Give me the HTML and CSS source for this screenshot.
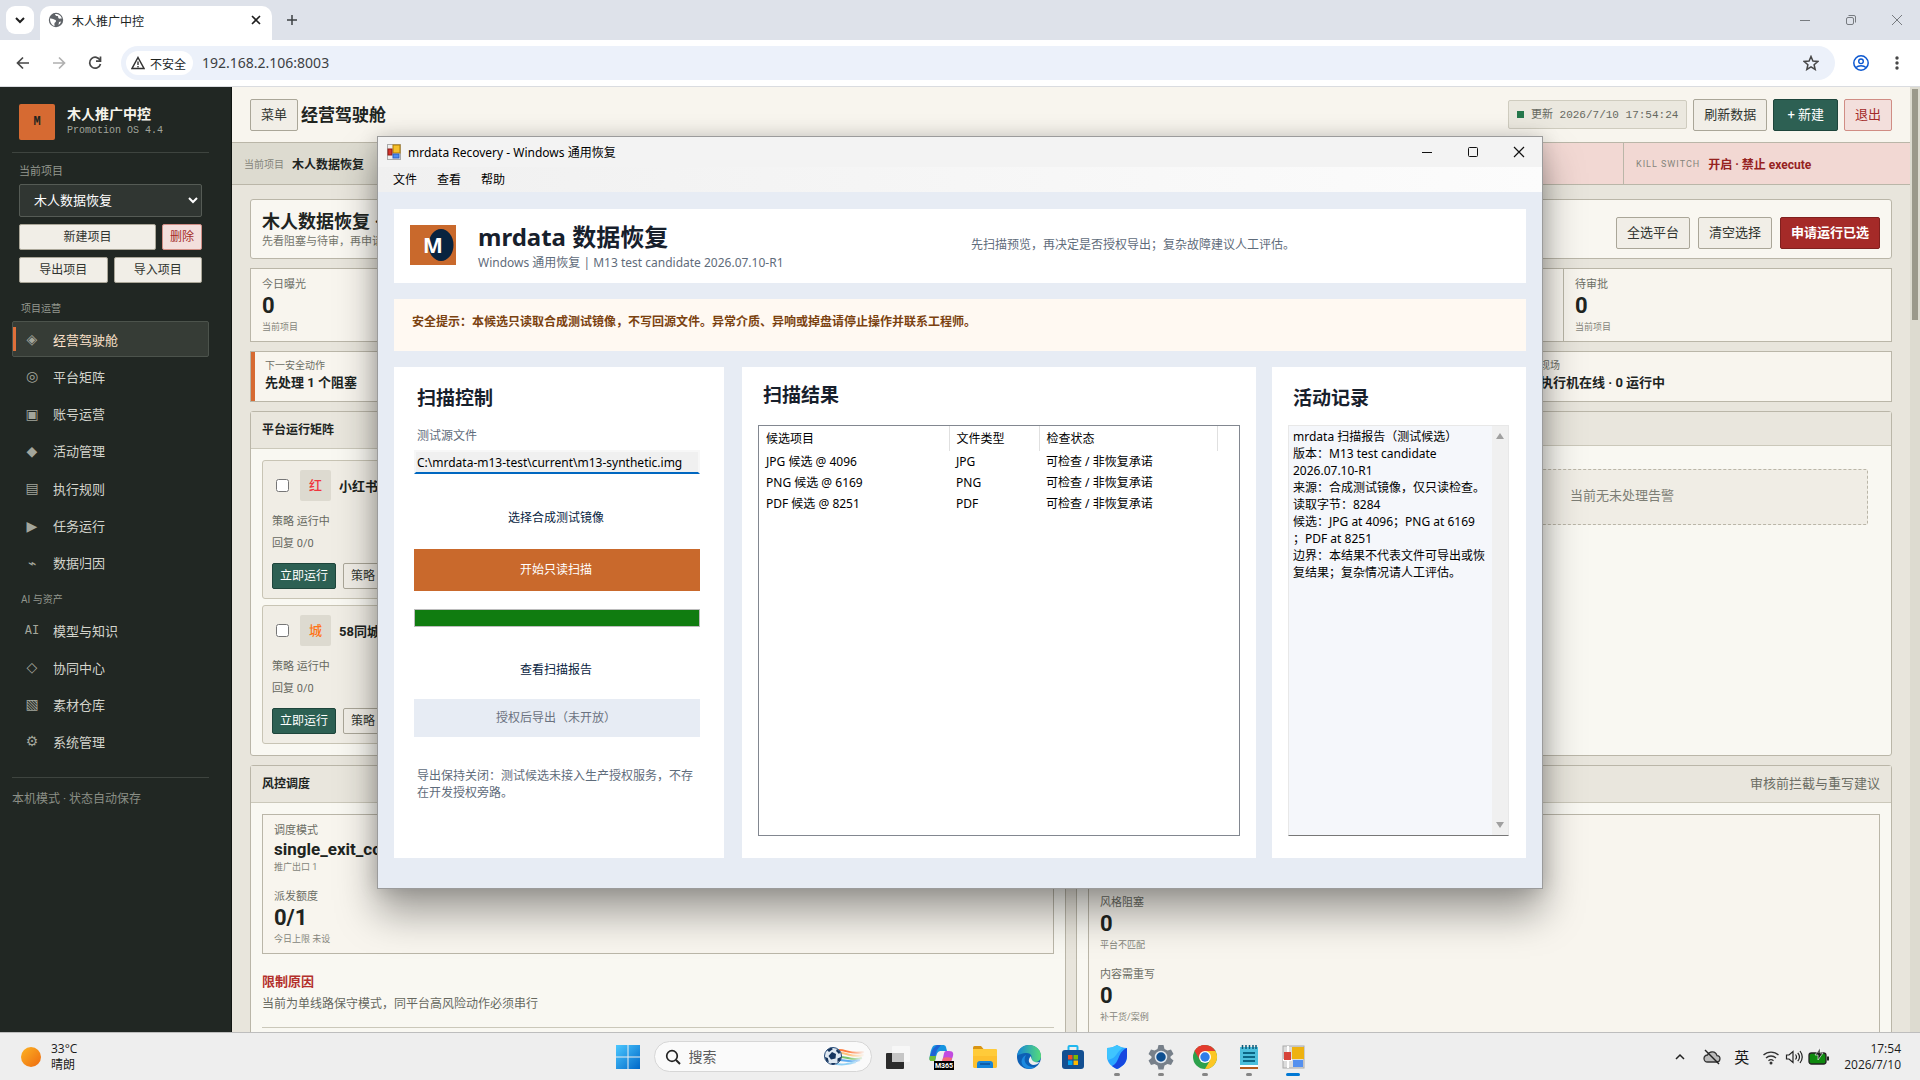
FILE: index.html
```html
<!DOCTYPE html>
<html lang="zh-CN">
<head>
<meta charset="utf-8">
<title>木人推广中控</title>
<link rel="stylesheet" href="styles.css">
</head>
<body>
<div class="desktop">
  <div class="browser">
    <div class="tabstrip">
      <button class="tab-search" aria-label="搜索标签页"><svg width="12" height="12" viewBox="0 0 12 12"><path d="M2 4l4 4 4-4" fill="none" stroke="#1f1f1f" stroke-width="2"/></svg></button>
      <div class="tab">
        <svg width="16" height="16" viewBox="0 0 16 16"><circle cx="8" cy="8" r="7.2" fill="#5f6368"/><path d="M2 6.500c2.500-.5 3.500 1 5 1.200 1.500.3 1.200 2.300 0 2.800-.8.400-.6 1.500-.4 3.500C4 13.500 1.800 10.500 2 6.500zM7 2c.3 1.500 1 2 2.500 2 1 .2.500 1.800 1 2.300.8.700 2 .2 3.300.2C13.500 4 10.500 1.500 7 2zM11 10l2-.5c-.3 1.500-1.200 2.700-2.500 3.500z" fill="#fff"/></svg>
        <span class="tab-title">木人推广中控</span>
        <button class="plain" aria-label="关闭标签页"><svg width="10" height="10" viewBox="0 0 10 10"><path d="M1 1l8 8M9 1l-8 8" stroke="#1f1f1f" stroke-width="1.600"/></svg></button>
      </div>
      <button class="plain new-tab" aria-label="新标签页"><svg width="12" height="12" viewBox="0 0 12 12"><path d="M6 1v10M1 6h10" stroke="#3c4043" stroke-width="1.500"/></svg></button>
      <div class="win-controls">
        <svg width="12" height="12" viewBox="0 0 12 12"><path d="M1 6.500h10" stroke="#777b80"/></svg>
        <svg width="12" height="12" viewBox="0 0 12 12"><rect x="1.500" y="3.500" width="7" height="7" rx="1.500" fill="none" stroke="#777b80"/><path d="M3.500 1.500h5.500a1.500 1.500 0 0 1 1.500 1.500v5.500" fill="none" stroke="#777b80"/></svg>
        <svg width="12" height="12" viewBox="0 0 12 12"><path d="M1 1l10 10M11 1L1 11" stroke="#777b80"/></svg>
      </div>
    </div>
    <div class="toolbar">
      <button class="plain" aria-label="后退"><svg width="16" height="16" viewBox="0 0 16 16"><path d="M14 8H3M8 2.500L2.500 8 8 13.500" fill="none" stroke="#474747" stroke-width="1.700"/></svg></button>
      <button class="plain" aria-label="前进"><svg width="16" height="16" viewBox="0 0 16 16"><path d="M2 8h11M8 2.500L13.500 8 8 13.500" fill="none" stroke="#b0b0b0" stroke-width="1.700"/></svg></button>
      <button class="plain" aria-label="重新加载"><svg width="16" height="16" viewBox="0 0 16 16"><path d="M13.200 5.500A5.500 5.500 0 1 0 13.500 9" fill="none" stroke="#474747" stroke-width="1.700"/><path d="M13.500 1.500v4.700H9" fill="none" stroke="#474747" stroke-width="1.700"/></svg></button>
      <div class="omnibox">
        <button class="chip"><svg width="14" height="14" viewBox="0 0 14 14"><path d="M7 1.500L13 12.500H1z" fill="none" stroke="#333" stroke-width="1.500"/><path d="M7 5.500v3.500M7 10v1.500" stroke="#333" stroke-width="1.400"/></svg>不安全</button>
        <input class="url" aria-label="地址" value="192.168.2.106:8003">
        <svg width="16" height="16" viewBox="0 0 16 16"><path d="M8 1.500l1.900 4.600 4.900.4-3.700 3.200 1.100 4.800L8 11.900l-4.200 2.600 1.100-4.800L1.200 6.500l4.900-.4z" fill="none" stroke="#474747" stroke-width="1.500"/></svg>
      </div>
      <svg width="16" height="16" viewBox="0 0 16 16"><circle cx="8" cy="8" r="7.200" fill="none" stroke="#0b57d0" stroke-width="1.500"/><circle cx="8" cy="6.300" r="2.300" fill="none" stroke="#0b57d0" stroke-width="1.400"/><path d="M3 12.500c2.500-2.400 7.500-2.400 10 0" fill="none" stroke="#0b57d0" stroke-width="1.500"/></svg>
      <svg width="16" height="16" viewBox="0 0 16 16"><g fill="#474747"><circle cx="8" cy="3" r="1.700"/><circle cx="8" cy="8" r="1.700"/><circle cx="8" cy="13" r="1.700"/></g></svg>
    </div>

    <div class="page">
      <aside class="sidebar">
        <div class="brand">
          <div class="brand-logo">M</div>
          <div><div class="brand-name">木人推广中控</div><div class="brand-sub">Promotion OS 4.4</div></div>
        </div>
        <div class="project">
          <label for="project">当前项目</label>
          <select id="project"><option>木人数据恢复</option></select>
          <div class="project-row wide-first"><button class="btn sm">新建项目</button><button class="btn sm danger">删除</button></div>
          <div class="project-row"><button class="btn sm">导出项目</button><button class="btn sm">导入项目</button></div>
        </div>
        <div class="nav-title">项目运营</div>
        <nav class="nav nav-main">
          <a href="#" class="active"><i>◈</i>经营驾驶舱</a>
          <a href="#"><i>◎</i>平台矩阵</a>
          <a href="#"><i>▣</i>账号运营</a>
          <a href="#"><i>◆</i>活动管理</a>
          <a href="#"><i>▤</i>执行规则</a>
          <a href="#"><i>▶</i>任务运行</a>
          <a href="#"><i>⌁</i>数据归因</a>
        </nav>
        <div class="nav-title">AI 与资产</div>
        <nav class="nav">
          <a href="#"><i class="mono">AI</i>模型与知识</a>
          <a href="#"><i>◇</i>协同中心</a>
          <a href="#"><i>▧</i>素材仓库</a>
          <a href="#"><i>⚙</i>系统管理</a>
        </nav>
        <div class="side-foot">本机模式 · 状态自动保存</div>
      </aside>

      <main class="main">
        <header class="topbar">
          <button class="btn">菜单</button>
          <h1>经营驾驶舱</h1>
          <div class="sync"><b></b><span>更新 2026/7/10 17:54:24</span></div>
          <button class="btn">刷新数据</button>
          <button class="btn primary">+ 新建</button>
          <button class="btn danger">退出</button>
        </header>
        <div class="strip">
          <div><span>当前项目</span><strong>木人数据恢复</strong></div>
          <div></div><div></div><div class="alert"></div>
          <div class="alert"><span class="caps">KILL SWITCH</span><strong>开启 · 禁止 execute</strong></div>
        </div>
        <div class="content">
          <section class="hero">
            <div class="hero-text"><h2>木人数据恢复 ·</h2><p>先看阻塞与待审，再申请</p></div>
            <button class="btn">全选平台</button>
            <button class="btn">清空选择</button>
            <button class="btn run">申请运行已选</button>
          </section>
          <section class="metrics">
            <div class="metric"><span>今日曝光</span><strong>0</strong><small>当前项目</small></div>
            <div class="metric"></div><div class="metric"></div><div class="metric"></div>
            <div class="metric"><span>待审批</span><strong>0</strong><small>当前项目</small></div>
          </section>
          <section class="actions">
            <div class="first"><span>下一安全动作</span><strong>先处理 1 个阻塞</strong></div>
            <div><span>现场</span><strong>执行机在线 · 0 运行中</strong></div>
          </section>
          <div class="row row-top">
            <section class="panel">
              <header class="panel-head tall"><h3>平台运行矩阵</h3></header>
              <div class="panel-body platforms">
                <article class="platform">
                  <div class="platform-head"><input type="checkbox" aria-label="选择小红书"><span class="avatar red">红</span><strong>小红书</strong></div>
                  <p>策略 运行中</p><p>回复 0/0</p>
                  <div class="platform-btns"><button class="btn sm primary">立即运行</button><button class="btn sm">策略</button></div>
                </article>
                <article class="platform">
                  <div class="platform-head"><input type="checkbox" aria-label="选择58同城"><span class="avatar orange">城</span><strong>58同城</strong></div>
                  <p>策略 运行中</p><p>回复 0/0</p>
                  <div class="platform-btns"><button class="btn sm primary">立即运行</button><button class="btn sm">策略</button></div>
                </article>
              </div>
            </section>
            <section class="panel">
              <header class="panel-head"></header>
              <div class="alerts"><div class="empty">当前无未处理告警</div></div>
            </section>
          </div>
          <div class="row row-bottom">
            <section class="panel">
              <header class="panel-head tall"><h3>风控调度</h3></header>
              <div class="panel-body">
                <div class="stats">
                  <div class="metric short"><span>调度模式</span><strong class="word">single_exit_conservative</strong><small>推广出口 1</small></div>
                  <div class="metric"><span>派发额度</span><strong>0/1</strong><small>今日上限 未设</small></div>
                </div>
                <h4>限制原因</h4>
                <p class="reason">当前为单线路保守模式，同平台高风险动作必须串行</p>
              </div>
            </section>
            <section class="panel">
              <header class="panel-head tall"><span class="hint">审核前拦截与重写建议</span></header>
              <div class="panel-body">
                <div class="stats">
                  <div class="metric"></div>
                  <div class="metric"><span>风格阻塞</span><strong>0</strong><small>平台不匹配</small></div>
                  <div class="metric"><span>内容需重写</span><strong>0</strong><small>补干货/案例</small></div>
                  <div class="metric"></div>
                </div>
              </div>
            </section>
          </div>
        </div>
      </main>
      <div class="page-scroll"><div></div></div>
    </div>
  </div>

  <div class="window">
    <div class="titlebar">
      <svg width="14" height="16" viewBox="0 0 14 16"><rect x=".5" y=".5" width="13" height="15" fill="#eee" stroke="#aaa"/><rect x="6" y="1" width="7" height="8" fill="#f5c02c" stroke="#b07a00"/><rect x="1" y="5" width="4" height="6" fill="#d8342c" stroke="#8c1c16"/><rect x="6" y="10" width="6" height="4" fill="#4d8df0" stroke="#2c5fc0"/></svg>
      <span>mrdata Recovery - Windows 通用恢复</span>
      <div class="dlg-controls">
        <svg width="12" height="12" viewBox="0 0 12 12"><path d="M1 6.500h10" stroke="#111"/></svg>
        <svg width="12" height="12" viewBox="0 0 12 12"><rect x="1.500" y="1.500" width="9" height="9" rx="1" fill="none" stroke="#111"/></svg>
        <svg width="12" height="12" viewBox="0 0 12 12"><path d="M1 1l10 10M11 1L1 11" stroke="#111" stroke-width="1.200"/></svg>
      </div>
    </div>
    <div class="menubar"><button>文件</button><button>查看</button><button>帮助</button></div>
    <div class="dlg-body">
      <header class="dlg-head">
        <svg width="46" height="40" viewBox="0 0 46 40"><rect width="46" height="40" fill="#c9692c"/><ellipse cx="31" cy="20" rx="12.500" ry="16" fill="#08233f"/><text x="13" y="28" class="logo-m">M</text></svg>
        <div class="dlg-names"><h2>mrdata 数据恢复</h2><p>Windows 通用恢复 | M13 test candidate 2026.07.10-R1</p></div>
        <p class="dlg-tip">先扫描预览，再决定是否授权导出；复杂故障建议人工评估。</p>
      </header>
      <div class="warning">安全提示：本候选只读取合成测试镜像，不写回源文件。异常介质、异响或掉盘请停止操作并联系工程师。</div>
      <div class="dlg-cols">
        <section class="card control">
          <h3>扫描控制</h3>
          <label for="src">测试源文件</label>
          <input id="src" value="C:\mrdata-m13-test\current\m13-synthetic.img">
          <button class="flat pick">选择合成测试镜像</button>
          <button class="flat scan">开始只读扫描</button>
          <div class="progress" role="progressbar" aria-label="扫描进度" aria-valuenow="100"></div>
          <button class="flat report">查看扫描报告</button>
          <button class="flat export" disabled>授权后导出（未开放）</button>
          <p>导出保持关闭：测试候选未接入生产授权服务，不存在开发授权旁路。</p>
        </section>
        <section class="card results">
          <h3>扫描结果</h3>
          <div class="list">
            <table>
              <colgroup><col class="c1"><col class="c2"><col class="c3"><col></colgroup>
              <thead><tr><th>候选项目</th><th>文件类型</th><th>检查状态</th><td></td></tr></thead>
              <tbody>
                <tr><td>JPG 候选 @ 4096</td><td>JPG</td><td>可检查 / 非恢复承诺</td></tr>
                <tr><td>PNG 候选 @ 6169</td><td>PNG</td><td>可检查 / 非恢复承诺</td></tr>
                <tr><td>PDF 候选 @ 8251</td><td>PDF</td><td>可检查 / 非恢复承诺</td></tr>
              </tbody>
            </table>
          </div>
        </section>
        <section class="card log">
          <h3 id="log-title">活动记录</h3>
          <div class="logbox">
            <textarea readonly aria-labelledby="log-title">mrdata 扫描报告（测试候选）
版本：M13 test candidate
2026.07.10-R1
来源：合成测试镜像，仅只读检查。
读取字节：8284
候选：JPG at 4096；PNG at 6169
；PDF at 8251
边界：本结果不代表文件可导出或恢
复结果；复杂情况请人工评估。</textarea>
            <div class="logbar"><svg width="10" height="8" viewBox="0 0 10 8"><path d="M5 1l4 6H1z" fill="#a0a0a0"/></svg><svg width="10" height="8" viewBox="0 0 10 8"><path d="M5 7L1 1h8z" fill="#a0a0a0"/></svg></div>
          </div>
        </section>
      </div>
    </div>
  </div>

  <footer class="taskbar">
    <div class="weather">
      <svg width="22" height="22" viewBox="0 0 22 22"><defs><linearGradient id="sun" x1="0" y1="0" x2="1" y2="1"><stop offset="0" stop-color="#fcb424"/><stop offset="1" stop-color="#ee6a10"/></linearGradient></defs><circle cx="11" cy="11" r="10" fill="url(#sun)"/></svg>
      <div>33°C<br>晴朗</div>
    </div>
    <div class="apps">
      <button class="start" aria-label="开始"><svg width="24" height="24" viewBox="0 0 24 24"><defs><linearGradient id="win" x1="0" y1="0" x2="1" y2="1"><stop offset="0" stop-color="#4cc8ff"/><stop offset="1" stop-color="#0067c8"/></linearGradient></defs><path d="M0 0h11.500v11.500H0zM12.500 0H24v11.500H12.500zM0 12.500h11.500V24H0zM12.500 12.500H24V24H12.500z" fill="url(#win)"/></svg></button>
      <label class="search">
        <svg width="16" height="16" viewBox="0 0 16 16"><circle cx="7" cy="7" r="5.300" fill="none" stroke="#222" stroke-width="1.700"/><path d="M11 11l4 4" stroke="#222" stroke-width="1.900"/></svg>
        <input placeholder="搜索" aria-label="搜索">
        <svg width="42" height="24" viewBox="0 0 42 24"><defs><linearGradient id="fade" x1="0" x2="1" y1="0" y2="0"><stop offset="0" stop-color="#fff" stop-opacity="1"/><stop offset=".6" stop-color="#fff"/><stop offset="1" stop-color="#fff" stop-opacity="0"/></linearGradient><mask id="trail"><rect width="42" height="24" fill="url(#fade)"/></mask></defs><g mask="url(#trail)" fill="none" stroke-width="2"><path d="M16 5c8 0 12 5 25 2" stroke="#ff7a3c"/><path d="M17 8c8 0 12 5 24 2" stroke="#ffc27a"/><path d="M17 12c8 0 12 4 22 1" stroke="#7cc36b"/><path d="M16 15c8 0 12 3 21 0" stroke="#5ba9f0"/><path d="M13 19c8 1 12 0 20-2" stroke="#8fd0f5"/></g><circle cx="10" cy="11" r="8.500" fill="#dfe8f1" stroke="#254a78"/><path d="M9 7l4 2-.5 4.500-4.500 1L5.500 11zM4 5l4-2.500L10 4 6 7zM14 4l3.500 3L16 9l-3-3zM1.800 12l3 1 1 4-2.300-.5zM18 12l-3.500 1.500V17l3-1.500zM8 18h5l-2 1.500H9z" fill="#16355e"/></svg>
      </label>
      <button aria-label="任务视图"><svg width="26" height="26" viewBox="0 0 26 26"><rect x="2" y="9" width="18" height="16" rx="1" fill="#2b2b2b"/><rect x="8" y="2" width="18" height="16" rx="1" fill="#f7f7f7"/><rect x="8" y="9" width="12" height="9" fill="#c6c6c6"/></svg></button>
      <button aria-label="Microsoft 365"><svg width="26" height="26" viewBox="0 0 26 26"><path d="M8 1h7c3 0 3 2 4 6h-6c-3 0-4 2-5 6l-1 4H5c-4 0-4-2-3-6 1-5 2-10 6-10z" fill="#1694e0"/><path d="M7 3c-3 2-4 6-5 10 1 1 3 0 5 0l2-7 4-5H9z" fill="#1f62d4"/><path d="M2 12h6l-1 5H4c-3 0-3-2-2-5z" fill="#71bd38"/><path d="M18 7h3c5 0 5 3 3 8-1 4-3 6-7 6H9c5 0 5-3 6-7 1-4 1-7 3-7z" fill="#c14be0"/><path d="M15 14c2-1 6-1 9 0-1 4-3 6-7 6h-6c3 0 3-3 4-6z" fill="#f26a75"/><rect x="6" y="17" width="20" height="9" fill="#000"/><text x="16" y="24" class="m365">M365</text></svg></button>
      <button aria-label="文件资源管理器"><svg width="26" height="26" viewBox="0 0 26 26"><path d="M1 3.500Q1 2 2.500 2H9l2.500 3H1z" fill="#d99412"/><path d="M1 5h23q1 0 1 1v16q0 2-2 2H3q-2 0-2-2z" fill="#ffcb3a"/><path d="M1 12h24v10q0 2-2 2H3q-2 0-2-2z" fill="#fdc02f"/><path d="M5 24v-4q0-3 3-3h10q3 0 3 3v4z" fill="#1583d8"/><path d="M8 20h10" stroke="#0d5ba6" stroke-width="2"/></svg></button>
      <button aria-label="Edge"><svg width="26" height="26" viewBox="0 0 26 26"><defs><linearGradient id="edge" x1="0" y1="0" x2="1" y2="0"><stop offset="0" stop-color="#1585d8"/><stop offset="1" stop-color="#56dc78"/></linearGradient></defs><circle cx="13" cy="13" r="12" fill="#0d5fb4"/><path d="M1 12C2 4 8 1 13 1c8 0 12 6 12 11 0 4-3 6-6 6s-5-1-4-3c2-3-1-6-4-6-5 0-9 2-10 3z" fill="url(#edge)"/><path d="M10 11c-4 6 1 13 9 12-3 2-7 2-9 1-6-3-6-10 0-13z" fill="#1b8ae0"/><path d="M15 12c-4 4-2 8 2 9 3 0 5-1 7-3-4 1-9 0-9-6z" fill="#eee"/></svg></button>
      <button aria-label="Microsoft Store"><svg width="26" height="26" viewBox="0 0 26 26"><path d="M8.500 6V3q0-1 1-1h7q1 0 1 1v3" fill="none" stroke="#1fb7ef" stroke-width="2"/><rect x="2" y="6" width="22" height="19" rx="3" fill="#134f91"/><path d="M8 11h4.500v4.500H8z" fill="#f25022"/><path d="M13.500 11H18v4.500h-4.500z" fill="#7fba00"/><path d="M8 16.500h4.500V21H8z" fill="#00a4ef"/><path d="M13.500 16.500H18V21h-4.500z" fill="#ffb900"/></svg></button>
      <button class="open" aria-label="安全"><svg width="26" height="26" viewBox="0 0 26 26"><path d="M3 4c4 0 7-1 10-3 3 2 6 3 10 3v8c0 7-5 11-10 13C8 23 3 19 3 12z" fill="#2aa8ff"/><path d="M23 4v8c0 7-5 11-10 13-2-1-4-2-5-3 8-3 5-14 15-18z" fill="#1747e0"/><path d="M13 1c2 1.500 4 2.500 6 2.700C12 8 13 14 4 16c-1-2-1-8-1-12 4 0 7-1 10-3z" fill="#3fc5ff"/></svg></button>
      <button class="open" aria-label="设置"><svg width="26" height="26" viewBox="0 0 26 26"><path d="M10.500 1h5l1 4 3 1.500 3.500-1 2.500 4.500-3 2.500v1.500l3 2.500-2.500 4.500-3.500-1-3 1.500-1 4h-5l-1-4-3-1.500-3.500 1L.5 16.500l3-2.500v-1.500L.5 10 3 5.500l3.500 1 3-1.500z" fill="#77808a"/><circle cx="13" cy="13" r="5.500" fill="#0e4f91" stroke="#dfe6ee" stroke-width="1.500"/></svg></button>
      <button class="open" aria-label="Chrome"><svg width="26" height="26" viewBox="0 0 26 26"><circle cx="13" cy="13" r="12" fill="#2da14c"/><path d="M13 13L2.600 7A12 12 0 0 1 23.400 7z" fill="#e33b2e"/><path d="M13 7h10.400A12 12 0 0 1 13 25l5.200-9z" fill="#fcc624"/><path d="M2.600 7A12 12 0 0 1 13 1v6L8 16z" fill="#e33b2e"/><circle cx="13" cy="13" r="6" fill="#fff"/><circle cx="13" cy="13" r="4.700" fill="#2f7de9"/></svg></button>
      <button class="open" aria-label="记事本"><svg width="26" height="26" viewBox="0 0 26 26"><rect x="4" y="3" width="18" height="20" fill="#4cbfdc"/><path d="M4 21h18v2H4z" fill="#fff"/><path d="M4 23h18v2H4z" fill="#b35a1c"/><path d="M6.500 1v4M10 1v4M13.500 1v4M17 1v4M20 1v4" stroke="#0b5a78" stroke-width="1.500"/><path d="M7 9h12M7 13h12M7 17h12" stroke="#0b6685" stroke-width="1.800"/></svg></button>
      <button class="open current" aria-label="mrdata Recovery"><svg width="26" height="26" viewBox="0 0 26 26"><rect x="3" y="2" width="21" height="22" fill="#ddd" stroke="#aaa"/><path d="M3 16h9M8 2v22" stroke="#fff" stroke-width="2"/><rect x="12" y="3" width="12" height="12" fill="#eeb211"/><rect x="4" y="8" width="7" height="8" fill="#d7443a"/><rect x="13" y="16" width="10" height="7" fill="#5590ee"/></svg></button>
    </div>
    <div class="tray">
      <svg class="chev" width="12" height="12" viewBox="0 0 12 12"><path d="M2 8l4-4 4 4" fill="none" stroke="#222" stroke-width="1.500"/></svg>
      <svg class="cloud" width="18" height="18" viewBox="0 0 18 18"><path d="M4.500 14h9a3.200 3.200 0 0 0 .5-6.400A5 5 0 0 0 4.500 7a3.500 3.500 0 0 0 0 7z" fill="#bbb" stroke="#333" stroke-width="1.300"/><path d="M2 2l14 14" stroke="#222" stroke-width="1.400"/></svg>
      <span class="ime">英</span>
      <svg width="18" height="18" viewBox="0 0 18 18"><path d="M1.500 7a11 11 0 0 1 15 0M4 10a7.200 7.200 0 0 1 10 0M6.500 12.800a3.600 3.600 0 0 1 5 0" fill="none" stroke="#333" stroke-width="1.300"/><circle cx="9" cy="15" r="1.500" fill="#333"/></svg>
      <svg width="18" height="18" viewBox="0 0 18 18"><path d="M1.500 7v4H4l4 3.500v-11L4 7zM10.500 6.500q2 2.500 0 5M12.800 4.800q3.400 4.200 0 8.400M15 3q4.500 6 0 12" fill="none" stroke="#222" stroke-width="1.200"/></svg>
      <svg class="battery" width="22" height="18" viewBox="0 0 22 18"><rect x="1" y="5" width="17" height="11" rx="2.500" fill="#0f8a0f" stroke="#222" stroke-width="1.300"/><path d="M20 8.500v4" stroke="#222" stroke-width="2"/><path d="M10 0v5M12 0L7 7h3v5l5-7h-3z" fill="#222" stroke="#fff" stroke-width=".6"/></svg>
      <div class="clock">17:54<br>2026/7/10</div>
    </div>
  </footer>
</div>
</body>
</html>
```
FILE: styles.css
```css
* { box-sizing: border-box; }
body { margin: 0; font-family: Roboto, "Noto Sans CJK SC", sans-serif; color: #20241f; }
button, input, select, textarea { font: inherit; color: inherit; margin: 0; }
h1, h2, h3, h4, p { margin: 0; }
svg { display: block; flex: none; }
.desktop { position: relative; height: 100vh; display: flex; flex-direction: column; overflow: hidden; }

/* Browser frame */
.browser { flex: 1; min-height: 0; display: flex; flex-direction: column; background: #fff; }
.plain { border: 0; padding: 0; background: none; }
.tabstrip { height: 40px; background: #dee2ea; display: flex; align-items: center; padding-left: 6px; font-size: 12px; }
.tab-search { width: 28px; height: 28px; border: 0; border-radius: 9px; background: #fff; padding: 0 8px; }
.tab { align-self: flex-end; margin-left: 6px; width: 232px; height: 34px; border-radius: 10px 10px 0 0; background: #fff; display: flex; align-items: center; gap: 8px; padding: 0 11px 6px 8px; }
.tab-title { flex: 1; }
.new-tab { margin-left: 14px; }
.win-controls { margin-left: auto; display: flex; gap: 34px; padding-right: 17px; }
.toolbar { height: 47px; border-bottom: 1px solid #dadce0; display: flex; align-items: center; gap: 20px; padding: 0 15px; }
.omnibox { flex: 1; height: 34px; margin-left: -2px; margin-right: -2px; border-radius: 17px; background: #ecf1fa; display: flex; align-items: center; padding: 0 16px 0 5px; }
.chip { height: 24px; border: 0; border-radius: 12px; background: #fff; padding: 0 7px 0 5px; display: flex; align-items: center; gap: 5px; font-size: 12px; }
.url { flex: 1; margin-left: 9px; border: 0; padding: 0; background: none; font: 14px/20px "Noto Sans", sans-serif; color: #3c4043; }

/* Page */
.page { flex: 1; min-height: 0; display: flex; background: #e8e5dc; }
.sidebar { width: 232px; flex: none; background: #212723; color: #d8d9d0; border-right: 1px solid #111512; padding: 17px 22px 0 12px; overflow: hidden; }
.brand { display: flex; gap: 12px; padding: 0 7px 12px; border-bottom: 1px solid #3e443f; }
.brand-logo { width: 36px; height: 36px; border-radius: 2px; background: #d66a32; color: #20241f; font: bold 12px/36px "Liberation Mono", monospace; text-align: center; }
.brand-name { font-size: 14px; line-height: 20px; font-weight: 700; color: #f6f4ec; }
.brand-sub { font: 10px/14px "Liberation Mono", monospace; color: #a0a49b; }
.project { padding: 11px 7px 0; }
.project label { display: block; font-size: 11px; line-height: 16px; color: #93978e; }
.project select { display: block; width: 100%; height: 33px; margin: 4px 0 7px; padding: 0 0 0 10px; border: 1px solid #555b55; border-radius: 2px; background: #303632; color: #fff; font-size: 13px; }
.project-row { display: grid; grid-template-columns: 1fr 1fr; gap: 6px; margin-bottom: 7px; }
.wide-first { grid-template-columns: 1fr 40px; }
.btn { height: 32px; padding: 0 10px; border: 1px solid #aaa698; border-radius: 2px; background: #f1eee7; color: #30342f; font-size: 13px; line-height: 18px; white-space: nowrap; }
.btn.sm { height: 26px; padding: 0 7px; font-size: 12px; }
.btn.primary { background: #2d6053; border-color: #1e453b; color: #fff; }
.btn.danger { background: #f3dfdc; border-color: #d08d84; color: #a32a28; padding: 0 4px; }
.btn.run { background: #a52a28; border-color: #80201e; color: #fff; font-weight: 700; }
.nav-title { padding: 0 9px; margin-top: 7px; font-size: 10px; line-height: 24px; color: #93978e; }
.project + .nav-title { margin-top: 14px; }
.nav { display: flex; flex-direction: column; gap: 1px; }
.nav-main { min-height: 260px; justify-content: space-between; gap: 0; }
.nav a { height: 36px; display: flex; align-items: center; padding-left: 8px; border: 1px solid transparent; border-radius: 2px; color: #d3d4cc; font-size: 13px; text-decoration: none; }
.nav i { width: 22px; margin-right: 10px; text-align: center; font: 14px/18px "DejaVu Sans", sans-serif; color: #a3a69c; }
.nav i.mono { font: 12px/18px "DejaVu Sans Mono", monospace; }
.nav a.active { background: linear-gradient(90deg, #e0703a 3px, transparent 3px) 0 50% / 100% 24px no-repeat #363c36; border-color: #4c534c; color: #fbe0ca; }
.side-foot { margin-top: 18px; padding-top: 12px; border-top: 1px solid #3e443f; font-size: 12px; line-height: 18px; color: #8b8f86; }

.main { flex: 1; min-width: 0; overflow: hidden; display: flex; flex-direction: column; }
.topbar { height: 56px; flex: none; border-bottom: 1px solid #bab6a8; background: #f8f5ee; display: flex; align-items: center; gap: 6px; padding: 0 18px; }
.topbar h1 { flex: 1; margin-left: -3px; font-size: 17px; line-height: 24px; }
.topbar .danger { padding: 0 10px; }
.topbar .primary { padding: 0 13px; }
.sync { height: 29px; display: flex; align-items: center; gap: 7px; padding: 0 8px; border: 1px solid #cfccbf; border-radius: 2px; background: #ebe8df; color: #66685f; font: 11px/18px "Liberation Mono", "Noto Sans CJK SC", monospace; white-space: nowrap; }
.sync b { width: 7px; height: 7px; background: #26784c; }
.strip { height: 42px; flex: none; display: grid; grid-template-columns: 1fr 1fr 1fr 1fr 287px; border-bottom: 1px solid #bab6a8; background: #dddbd0; }
.strip div { display: flex; align-items: center; gap: 8px; padding-left: 12px; border-left: 1px solid #bab6a8; white-space: nowrap; }
.strip div:first-child { border-left: 0; }
.strip .alert { background: #f2d8d3; color: #96221f; }
.strip span { font-size: 10px; color: #85857b; }
.strip .caps { letter-spacing: 1px; font-size: 9px; }
.strip strong { font-size: 12px; }
.content { padding: 14px 18px 0; display: flex; flex-direction: column; gap: 9px; }
.hero { display: flex; align-items: flex-end; gap: 8px; height: 60px; padding: 0 11px 9px; border: 1px solid #bab6a8; border-radius: 3px; background: #f9f7f1; }
.hero-text { flex: 1; }
.hero h2 { font-size: 18px; line-height: 24px; }
.hero p { font-size: 11px; line-height: 15px; color: #74756c; }
.metrics { display: grid; grid-template-columns: repeat(5, 1fr); border: 1px solid #bab6a8; background: #f8f5ee; min-height: 74px; }
.metrics .metric + .metric { border-left: 1px solid #bab6a8; }
.metric { display: flex; flex-direction: column; min-height: 72px; padding: 8px 11px 0; }
.metric span, .actions span { font-size: 11px; line-height: 16px; color: #6c6e65; }
.metric strong { font-size: 22px; line-height: 26px; }
.metric strong.word { font-size: 17px; line-height: 20px; }
.metric small { font-size: 9px; line-height: 16px; color: #85857b; }
.metric.short { min-height: 66px; }
.actions { display: grid; grid-template-columns: 1fr 362px; height: 51px; border: 1px solid #bab6a8; background: #f8f5ee; }
.actions div { display: flex; flex-direction: column; padding: 6px 11px 0; }
.actions .first { border-left: 4px solid #d66a32; padding-left: 10px; }
.actions span { font-size: 10px; }
.actions strong { font-size: 13px; line-height: 18px; }
.row { display: grid; grid-template-columns: 1fr 1fr; gap: 10px; }
.row-top { grid-template-columns: minmax(0, 1fr) 540px; }
.panel { border: 1px solid #bab6a8; border-radius: 3px; background: #f9f8f2; }
.panel-head { height: 34px; border-bottom: 1px solid #cbc8ba; background: #e9e6dd; display: flex; align-items: center; padding: 0 11px; }
.panel-head.tall { height: 37px; }
.panel-head h3 { font-size: 12px; line-height: 18px; }
.hint { margin-left: auto; font-size: 13px; line-height: 18px; color: #6c6e65; }
.panel-body { padding: 11px; }
.platforms { display: grid; gap: 6px; }
.platform { padding: 9px; border: 1px solid #c8c4b4; border-radius: 3px; background: #f0ede5; height: 139px; }
.platform-head { display: flex; align-items: center; gap: 8px; margin-bottom: 10px; font-size: 13px; }
.platform-head input { width: 13px; height: 13px; margin: 0 3px 0 4px; }
.avatar { width: 31px; height: 31px; border-radius: 2px; background: #dddad0; text-align: center; font-weight: 500; line-height: 31px; }
.avatar.red { color: #f0353d; }
.avatar.orange { color: #ff7416; }
.platform p { font-size: 11px; line-height: 22px; color: #66685f; }
.platform-btns { display: flex; gap: 7px; margin-top: 8px; }
.alerts { padding: 23px; }
.empty { height: 56px; border: 1px dashed #bab6a8; border-radius: 2px; background: #f0ede5; display: flex; align-items: center; justify-content: center; font-size: 13px; line-height: 18px; padding-bottom: 3px; color: #7d7e75; }
.stats { border: 1px solid #bab6a8; background: #f8f5ee; }
.panel-body h4 { margin-top: 18px; font-size: 13px; line-height: 20px; color: #b3302c; }
.reason { padding: 3px 0 14px; border-bottom: 1px solid #cbc8ba; font-size: 12px; line-height: 18px; color: #66685f; }
.row-bottom .panel { min-height: 300px; }
.page-scroll { width: 10px; flex: none; background: #dddbd0; padding: 2px; }
.page-scroll div { height: 231px; background: #9b998b; }

/* Recovery window */
.window { position: absolute; left: 377px; top: 136px; width: 1166px; height: 753px; border: 1px solid #9b9b9b; background: #e7ecf4; display: flex; flex-direction: column; font-family: "Noto Sans", "Noto Sans CJK SC", sans-serif; font-size: 12px; line-height: 17px; color: #000; box-shadow: 0 24px 38px rgba(0,0,0,.36), 0 0 18px rgba(0,0,0,.16); }
.titlebar { height: 30px; background: #f3f3f3; display: flex; align-items: center; gap: 7px; padding: 0 17px 0 9px; }
.dlg-controls { margin-left: auto; display: flex; gap: 34px; }
.menubar { height: 25px; background: linear-gradient(90deg, #f0f0f0, #fcfcfc); display: flex; gap: 20px; padding: 0 15px; }
.menubar button { border: 0; padding: 0; background: none; }
.dlg-body { flex: 1; min-height: 0; padding: 17px 16px 30px; display: flex; flex-direction: column; gap: 16px; }
.dlg-head { height: 74px; background: #fff; display: flex; padding: 16px; }
.logo-m { font: bold 21px "Noto Sans", sans-serif; fill: #fff; }
.dlg-names { margin: -5px 0 0 22px; width: 493px; }
.dlg-names h2 { font-size: 24px; line-height: 34px; color: #17202c; }
.dlg-names p, .dlg-tip { color: #5f6c7b; }
.dlg-tip { padding-top: 11px; }
.warning { height: 52px; background: #fff9f2; color: #7b4210; font-weight: 700; padding: 14px 18px; }
.dlg-cols { flex: 1; min-height: 0; display: grid; grid-template-columns: 330px 1fr 254px; gap: 16px; }
.card { background: #fff; display: flex; flex-direction: column; }
.card h3 { font-size: 19px; line-height: 26px; color: #17202c; }
.control { padding: 18px 24px 0 20px; }
.control h3, .control label, .control p { margin-left: 3px; }
.control label { margin-top: 16px; color: #5f6c7b; }
.control input { height: 24px; margin-top: 6px; padding: 0 1px; border: 2px solid #f7f7f7; border-bottom-color: #0067c0; background: #f0f0f0; }
.flat { border: 0; padding: 0 2px 2px 0; background: #fff; color: #08233f; text-align: center; }
.pick { height: 34px; margin-top: 27px; }
.scan { height: 42px; margin-top: 14px; background: #c9692c; color: #fff; }
.progress { height: 18px; margin-top: 18px; border: 1px solid #bcbcbc; background: #107c10; }
.report { height: 34px; margin-top: 26px; }
.export { height: 38px; margin-top: 12px; background: #e7ecf4; color: #6b7280; }
.control p { margin-top: 30px; color: #5f6c7b; line-height: 17px; }
.results { margin-left: 2px; padding: 15px 16px 22px; }
.results h3 { margin-left: 5px; }
.list { flex: 1; margin-top: 17px; border: 1px solid #828790; }
.list table { border-collapse: collapse; table-layout: fixed; width: 100%; }
.c1 { width: 190px; } .c2 { width: 90px; } .c3 { width: 178px; }
.list th { height: 25px; font-weight: 400; text-align: left; border-right: 1px solid #e0e0e0; }
.list th, .list td { padding: 0 0 0 7px; white-space: nowrap; }
.list tbody td { height: 21px; }
.log { padding: 18px 17px 22px 16px; }
.log h3 { margin-left: 5px; }
.logbox { flex: 1; margin-top: 14px; display: flex; border: 1px solid #e8e8e8; border-bottom-color: #777; background: #f5f7fb; }
.logbox textarea { flex: 1; min-width: 0; border: 0; padding: 2px 0 0 4px; background: none; resize: none; overflow: hidden; white-space: pre; line-height: 17px; outline: 0; }
.logbar { width: 16px; background: #f0f0f0; display: flex; flex-direction: column; justify-content: space-between; align-items: center; padding: 6px 0; }

/* Taskbar */
.taskbar { height: 48px; flex: none; border-top: 1px solid #bdbdbd; background: #eee; display: grid; grid-template-columns: 1fr auto 1fr; align-items: center; font: 12px/16px "Open Sans", "Noto Sans CJK SC", sans-serif; color: #1b1b1b; }
.weather { display: flex; align-items: center; gap: 9px; padding-left: 20px; }
.apps { display: flex; align-items: center; height: 47px; }
.apps button { position: relative; width: 44px; height: 47px; border: 0; padding: 0 9px; background: none; }
.apps .start { padding: 0 10px; }
.search { width: 218px; height: 31px; margin: 0 3px 0 4px; border: 1px solid #d6d6d6; border-radius: 16px; background: #fafafa; display: flex; align-items: center; gap: 8px; padding: 0 6px 0 10px; }
.search input { flex: 1; min-width: 0; border: 0; padding: 0; background: none; font-size: 14px; line-height: 20px; }
.search input::placeholder { color: #5c5c5c; opacity: 1; }
.apps .open::after { content: ""; position: absolute; left: 19px; bottom: 4px; width: 6px; height: 3px; border-radius: 2px; background: #858585; }
.apps .current::after { left: 15px; width: 14px; background: #0078d4; }
.m365 { font: bold 7px Roboto, sans-serif; fill: #fff; text-anchor: middle; }
.tray { justify-self: end; display: flex; align-items: center; gap: 5px; padding-right: 19px; }
.chev { margin-right: 12px; }
.cloud { margin-right: 8px; }
.ime { margin-right: 8px; font-size: 15px; }
.clock { margin-left: 9px; text-align: right; }
```
